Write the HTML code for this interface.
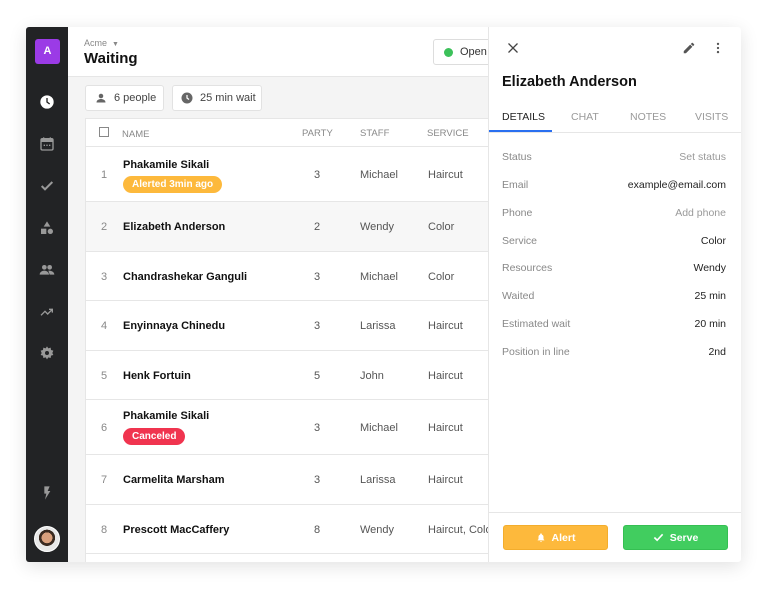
<!DOCTYPE html>
<html><head><style>
*{box-sizing:border-box;margin:0;padding:0}
body{width:767px;height:600px;background:#fff;font-family:"Liberation Sans",sans-serif;position:relative;overflow:hidden}
.frame{position:absolute;left:26px;top:27px;width:715px;height:535px;box-shadow:0 4px 18px rgba(0,0,0,.12);border-radius:3px;overflow:hidden;background:#f4f4f4}
.side{position:absolute;left:0;top:0;width:42px;height:535px;background:#222325}
.ic{position:absolute;left:13px}
.main{position:absolute;left:42px;top:0;width:420px;height:535px}
.hdr{position:absolute;left:0;top:0;width:420px;height:50px;background:#fff;border-bottom:1px solid #e6e6e6}
.chip{position:absolute;top:58px;height:26px;background:#fff;border:1px solid #e2e2e2;border-radius:3px;font-size:11px;color:#444;line-height:24px}
.tbl{position:absolute;left:17px;top:91px;width:420px;height:450px;background:#fff;border:1px solid #e6e6e6}
.row{position:absolute;left:0;width:420px;border-bottom:1px solid #e6e6e6;font-size:11px;color:#555}
.row span{position:absolute}
.n{left:15px;color:#888}
.nm{left:37px;font-weight:bold;color:#111}
.pt{left:228px}.st{left:274px}.sv{left:342px}
.th{font-size:9.5px;color:#888}
.badge{position:absolute;left:37px;height:17px;border-radius:9px;color:#fff;font-weight:bold;font-size:10px;line-height:17px;padding:0 9px}
.panel{position:absolute;left:462px;top:0;width:253px;height:535px;background:#fff;border-left:1px solid #e6e6e6}
.dl{position:absolute;left:13px;font-size:10.5px;color:#888}
.dr{position:absolute;right:15px;font-size:10.5px;color:#222;text-align:right}
.tab{position:absolute;top:84px;font-size:10.5px;color:#999}
.btn{position:absolute;top:498px;height:25px;width:105px;border-radius:3px;color:#fff;font-weight:bold;font-size:10.5px;line-height:25px;text-align:center}
.btn svg{vertical-align:-2px;margin-right:6px}
</style></head><body>
<div class="frame">
 <div class="side">
  <div style="position:absolute;left:9px;top:12px;width:25px;height:25px;background:#9b3be6;border-radius:3px;color:#fff;font-size:11px;font-weight:bold;text-align:center;line-height:25px">A</div>
  <svg class="ic" style="top:67px" width="16" height="16" viewBox="0 0 24 24"><circle cx="12" cy="12" r="10" fill="#fff"/><path d="M12 6v6l4 3" stroke="#222" stroke-width="2" fill="none"/></svg>
  <svg class="ic" style="top:109px" width="16" height="16" viewBox="0 0 24 24"><rect x="3" y="4" width="18" height="17" rx="2" fill="none" stroke="#999" stroke-width="2"/><rect x="3" y="4" width="18" height="5" fill="#999"/><path d="M7 2v4M17 2v4" stroke="#999" stroke-width="2"/><path d="M7 14h2M11 14h2M15 14h2" stroke="#999" stroke-width="2"/></svg>
  <svg class="ic" style="top:151px" width="16" height="16" viewBox="0 0 24 24"><path d="M4 12l5 5L20 6" stroke="#999" stroke-width="3" fill="none"/></svg>
  <svg class="ic" style="top:193px" width="16" height="16" viewBox="0 0 24 24"><path d="M12 2l5 8H7z" fill="#999"/><rect x="3" y="13" width="8" height="8" fill="#999"/><circle cx="17" cy="17" r="4" fill="#999"/></svg>
  <svg class="ic" style="top:235px" width="16" height="16" viewBox="0 0 24 24"><circle cx="8" cy="8" r="3.5" fill="#999"/><circle cx="16" cy="8" r="3.5" fill="#999"/><path d="M1 19c0-4 4-6 7-6s7 2 7 6zM14 13c3 0 9 1 9 6h-7" fill="#999"/></svg>
  <svg class="ic" style="top:277px" width="16" height="16" viewBox="0 0 24 24"><path d="M3 17l6-6 4 4 7-7M15 8h5v5" stroke="#999" stroke-width="2" fill="none"/></svg>
  <svg class="ic" style="top:318px" width="16" height="16" viewBox="0 0 24 24"><path d="M12 2l2 3 3.5-1 .5 3.5 3.5 1-1.5 3.5 1.5 3-3.5 1-.5 3.5-3.5-1-2 3-2-3-3.5 1-.5-3.5-3.5-1 1.5-3-1.5-3.5 3.5-1 .5-3.5 3.5 1z" fill="#999"/><circle cx="12" cy="12" r="3" fill="#222325"/></svg>
  <svg class="ic" style="top:458px" width="16" height="16" viewBox="0 0 24 24"><path d="M8 2h8l-3 7h4L9 22l2-9H8z" fill="#999"/></svg>
  <div style="position:absolute;left:8px;top:499px;width:26px;height:26px;border-radius:50%;background:radial-gradient(circle at 50% 45%,#d9a07d 0 30%,#3a2a20 31% 45%,#e8e8e8 46%);border:1px solid #fff"></div>
 </div>
 <div class="main">
  <div class="hdr">
   <div style="position:absolute;left:16px;top:11px;font-size:9px;color:#888">Acme &nbsp;<span style="font-size:7px">▼</span></div>
   <div style="position:absolute;left:16px;top:23px;font-size:15px;font-weight:bold;color:#111">Waiting</div>
   <div style="position:absolute;left:365px;top:12px;width:70px;height:26px;border:1px solid #ddd;border-radius:3px;background:#fff;font-size:11px;color:#333;line-height:24px;padding-left:26px"><span style="position:absolute;left:10px;top:8px;width:9px;height:9px;border-radius:50%;background:#3cc15a"></span>Open</div>
  </div>
  <div class="chip" style="left:17px;width:79px;padding-left:28px"><svg style="position:absolute;left:9px;top:6px" width="12" height="12" viewBox="0 0 24 24"><circle cx="12" cy="8" r="4.5" fill="#666"/><path d="M3 21c0-5 5-7 9-7s9 2 9 7z" fill="#666"/></svg>6 people</div>
  <div class="chip" style="left:104px;width:90px;padding-left:27px"><svg style="position:absolute;left:8px;top:6px" width="12" height="12" viewBox="0 0 24 24"><circle cx="12" cy="12" r="11" fill="#666"/><path d="M12 6v6l4 3" stroke="#fff" stroke-width="2.5" fill="none"/></svg>25 min wait</div>
  <div class="tbl">
   <div class="row th" style="top:0;height:28px"><span style="left:13px;top:8px;width:10px;height:10px;border:1px solid #888"></span><span style="left:36px;top:10px">NAME</span><span style="left:216px;top:9px">PARTY</span><span style="left:274px;top:9px">STAFF</span><span style="left:341px;top:9px">SERVICE</span></div>
   <div class="row" style="top:28px;height:55px"><span class="n" style="top:22px">1</span><span class="nm" style="top:12px">Phakamile Sikali</span><div class="badge" style="top:29px;background:#fdb93c">Alerted 3min ago</div><span class="pt" style="top:22px">3</span><span class="st" style="top:22px">Michael</span><span class="sv" style="top:22px">Haircut</span></div>
   <div class="row" style="top:83px;height:50px;background:#f7f7f7"><span class="n" style="top:19px">2</span><span class="nm" style="top:19px">Elizabeth Anderson</span><span class="pt" style="top:19px">2</span><span class="st" style="top:19px">Wendy</span><span class="sv" style="top:19px">Color</span></div>
   <div class="row" style="top:133px;height:49px"><span class="n" style="top:19px">3</span><span class="nm" style="top:19px">Chandrashekar Ganguli</span><span class="pt" style="top:19px">3</span><span class="st" style="top:19px">Michael</span><span class="sv" style="top:19px">Color</span></div>
   <div class="row" style="top:182px;height:50px"><span class="n" style="top:19px">4</span><span class="nm" style="top:19px">Enyinnaya Chinedu</span><span class="pt" style="top:19px">3</span><span class="st" style="top:19px">Larissa</span><span class="sv" style="top:19px">Haircut</span></div>
   <div class="row" style="top:232px;height:49px"><span class="n" style="top:19px">5</span><span class="nm" style="top:19px">Henk Fortuin</span><span class="pt" style="top:19px">5</span><span class="st" style="top:19px">John</span><span class="sv" style="top:19px">Haircut</span></div>
   <div class="row" style="top:281px;height:55px"><span class="n" style="top:22px">6</span><span class="nm" style="top:10px">Phakamile Sikali</span><div class="badge" style="top:28px;background:#f0344f">Canceled</div><span class="pt" style="top:22px">3</span><span class="st" style="top:22px">Michael</span><span class="sv" style="top:22px">Haircut</span></div>
   <div class="row" style="top:336px;height:50px"><span class="n" style="top:19px">7</span><span class="nm" style="top:19px">Carmelita Marsham</span><span class="pt" style="top:19px">3</span><span class="st" style="top:19px">Larissa</span><span class="sv" style="top:19px">Haircut</span></div>
   <div class="row" style="top:386px;height:49px"><span class="n" style="top:19px">8</span><span class="nm" style="top:19px">Prescott MacCaffery</span><span class="pt" style="top:19px">8</span><span class="st" style="top:19px">Wendy</span><span class="sv" style="top:19px;white-space:nowrap">Haircut, Color</span></div>
  </div>
 </div>
 <div class="panel">
  <svg style="position:absolute;left:18px;top:15px" width="12" height="12" viewBox="0 0 24 24"><path d="M3 3l18 18M21 3L3 21" stroke="#444" stroke-width="2.5"/></svg>
  <svg style="position:absolute;left:193px;top:14px" width="14" height="14" viewBox="0 0 24 24"><path d="M3 17.25V21h3.75L17.8 9.94l-3.75-3.75zM20.7 7.04a1 1 0 000-1.41l-2.34-2.34a1 1 0 00-1.410 0l-1.83 1.83 3.75 3.75z" fill="#555"/></svg>
  <svg style="position:absolute;left:222px;top:14px" width="14" height="14" viewBox="0 0 24 24"><circle cx="12" cy="5" r="2" fill="#555"/><circle cx="12" cy="12" r="2" fill="#555"/><circle cx="12" cy="19" r="2" fill="#555"/></svg>
  <div style="position:absolute;left:13px;top:47px;font-size:14.5px;font-weight:bold;color:#111">Elizabeth Anderson</div>
  <div class="tab" style="left:13px;color:#222">DETAILS</div>
  <div class="tab" style="left:82px">CHAT</div>
  <div class="tab" style="left:141px">NOTES</div>
  <div class="tab" style="left:206px">VISITS</div>
  <div style="position:absolute;left:0;top:103px;width:63px;height:2px;background:#2a6ff0"></div>
  <div style="position:absolute;left:0;top:105px;width:253px;height:1px;background:#e6e6e6"></div>
  <div class="dl" style="top:124px">Status</div><div class="dr" style="top:124px;color:#999">Set status</div>
  <div class="dl" style="top:152px">Email</div><div class="dr" style="top:152px">example@email.com</div>
  <div class="dl" style="top:180px">Phone</div><div class="dr" style="top:180px;color:#999">Add phone</div>
  <div class="dl" style="top:208px">Service</div><div class="dr" style="top:208px">Color</div>
  <div class="dl" style="top:235px">Resources</div><div class="dr" style="top:235px">Wendy</div>
  <div class="dl" style="top:263px">Waited</div><div class="dr" style="top:263px">25 min</div>
  <div class="dl" style="top:291px">Estimated wait</div><div class="dr" style="top:291px">20 min</div>
  <div class="dl" style="top:319px">Position in line</div><div class="dr" style="top:319px">2nd</div>
  <div style="position:absolute;left:0;top:485px;width:253px;height:1px;background:#e6e6e6"></div>
  <div class="btn" style="left:14px;background:#fdb93c;border:1px solid #f3ad2c"><svg width="10" height="11" viewBox="0 0 24 24"><path d="M12 2a2 2 0 012 2v1a6 6 0 014 6v5l2 2v1H4v-1l2-2v-5a6 6 0 014-6V4a2 2 0 012-2zM10 21h4a2 2 0 01-4 0z" fill="#fff"/></svg>Alert</div>
  <div class="btn" style="left:134px;background:#41cd5f;border:1px solid #35bf52"><svg width="11" height="11" viewBox="0 0 24 24"><path d="M3 12l6 6L21 5" stroke="#fff" stroke-width="3.5" fill="none"/></svg>Serve</div>
 </div>
</div>
</body></html>
